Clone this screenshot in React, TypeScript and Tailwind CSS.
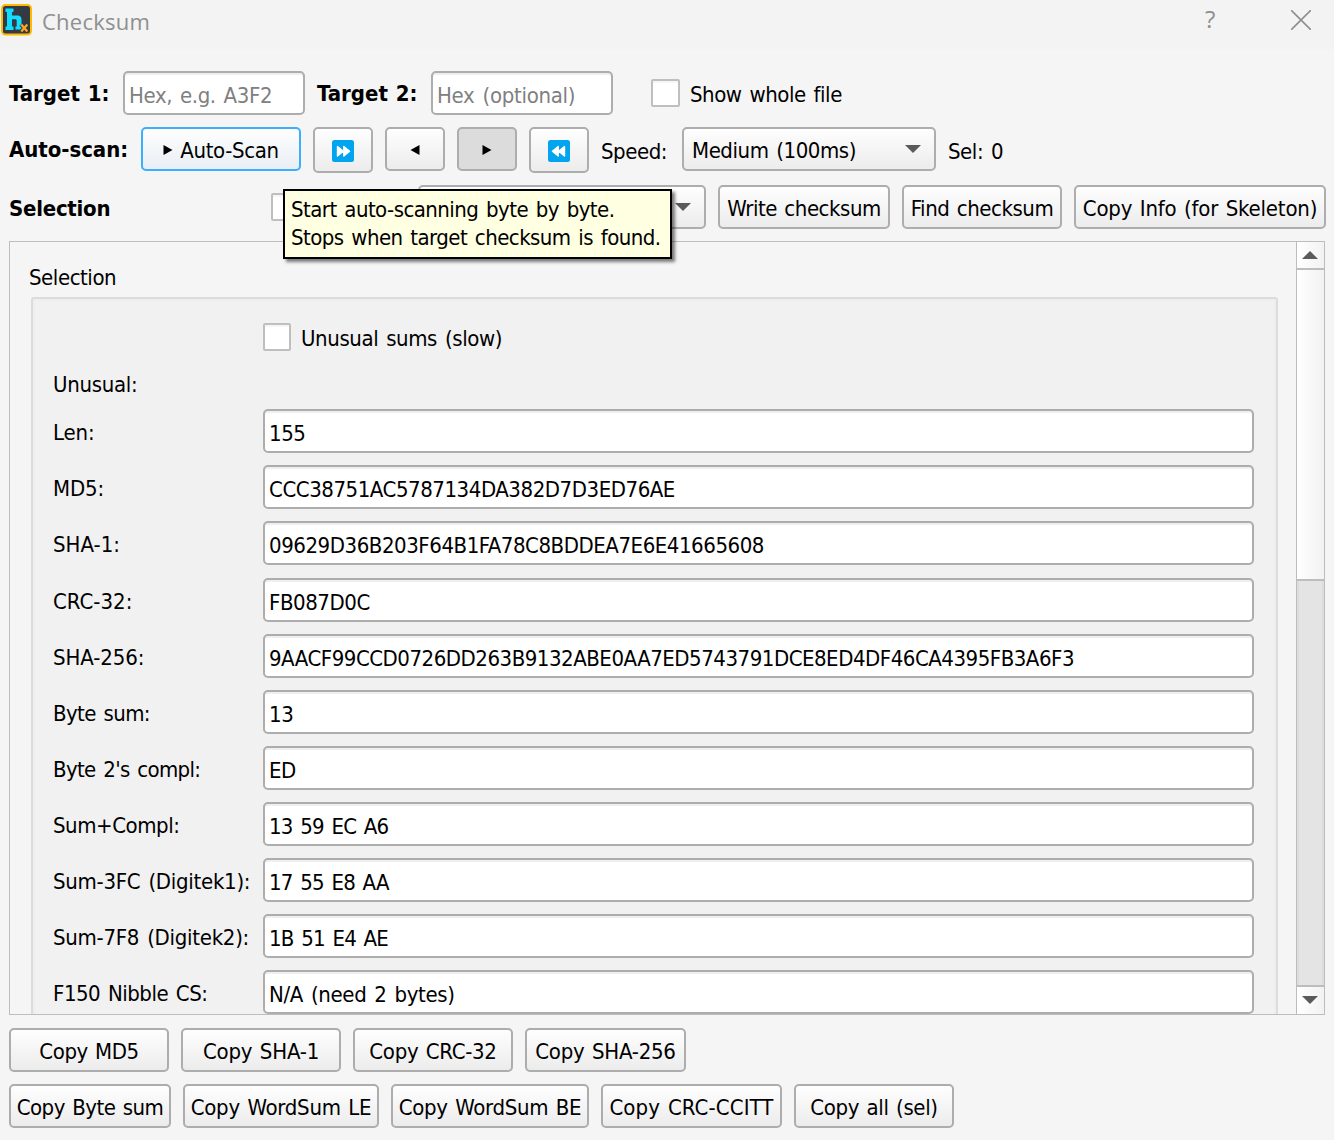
import React, { useState } from 'react';
import clsx from 'clsx';

const fields = [
  { label: 'Len:', value: '155', labelClass: 'tracking-[-0.1px]' },
  { label: 'MD5:', value: 'CCC38751AC5787134DA382D7D3ED76AE', labelClass: 'tracking-[-0.1px]' },
  { label: 'SHA-1:', value: '09629D36B203F64B1FA78C8BDDEA7E6E41665608', labelClass: 'tracking-normal' },
  { label: 'CRC-32:', value: 'FB087D0C', labelClass: 'tracking-normal' },
  {
    label: 'SHA-256:',
    value: '9AACF99CCD0726DD263B9132ABE0AA7ED5743791DCE8ED4DF46CA4395FB3A6F3',
    labelClass: 'tracking-[-0.1px]',
    inputClass: 'tracking-[-0.48px]',
  },
  { label: 'Byte sum:', value: '13', labelClass: 'tracking-[-0.6px]' },
  { label: "Byte 2's compl:", value: 'ED', labelClass: 'tracking-[-0.65px]' },
  {
    label: 'Sum+Compl:',
    value: '13 59 EC A6',
    labelClass: 'tracking-[-0.45px]',
    inputClass: 'tracking-[-0.75px]',
  },
  {
    label: 'Sum-3FC (Digitek1):',
    value: '17 55 E8 AA',
    labelClass: 'tracking-[-0.28px]',
    inputClass: 'tracking-[-0.75px]',
  },
  {
    label: 'Sum-7F8 (Digitek2):',
    value: '1B 51 E4 AE',
    labelClass: 'tracking-[-0.28px]',
    inputClass: 'tracking-[-0.75px]',
  },
  {
    label: 'F150 Nibble CS:',
    value: 'N/A (need 2 bytes)',
    labelClass: 'tracking-[-0.5px]',
    inputClass: 'tracking-[-0.35px]',
  },
];

type ButtonProps = {
  className?: string;
  children?: React.ReactNode;
};

const Button = ({ className, children }: ButtonProps) => (
  <button
    className={clsx(
      'flex shrink-0 items-center justify-center whitespace-nowrap rounded-[5px] border-2 pt-[3px] [word-spacing:1.5px]',
      className
    )}
  >
    {children}
  </button>
);

const plain = 'h-11 border-[#adadad] bg-linear-to-b from-[#fefefe] to-[#ececec]';

const Checkbox = ({ className }: { className?: string }) => (
  <span
    className={clsx(
      'block h-7 shrink-0 rounded-[2px] border-2 border-[#bfbfbf] bg-white shadow-[inset_0_2px_0_#f6f6f6]',
      className
    )}
  />
);

const Arrow = ({ dir }: { dir: 'up' | 'down' }) => (
  <svg width="16" height="8" viewBox="0 0 16 8" className="shrink-0">
    <path d={dir === 'up' ? 'M0 8L8 0L16 8Z' : 'M0 0H16L8 8Z'} fill="#5a5a5a" />
  </svg>
);

const Play = ({ left }: { left?: boolean }) => (
  <svg width="10" height="10" viewBox="0 0 10 10" className="-mt-0.5 shrink-0">
    <path d={left ? 'M9.5 0V10L0.5 5Z' : 'M0.5 0V10L9.5 5Z'} fill="#000" />
  </svg>
);

const Fast = ({ back }: { back?: boolean }) => (
  <svg
    width="22"
    height="22"
    viewBox="0 0 22 22"
    className={clsx('-mt-0.5 shrink-0', back && '-scale-x-100')}
  >
    <rect width="22" height="22" rx="2.5" fill="#00a4ef" />
    <path
      d="M5.5 6.5L11.3 11.2L5.5 16ZM11.8 6.5L17.6 11.2L11.8 16Z"
      fill="#fff"
      stroke="#fff"
      strokeWidth="1.4"
      strokeLinejoin="round"
    />
  </svg>
);

const Logo = () => (
  <svg width="32" height="36" viewBox="0 0 32 36" className="shrink-0">
    <rect x="2" y="5" width="29" height="29.5" rx="3.5" fill="#343a44" stroke="#ffb900" strokeWidth="2" />
    <path
      d="M5.5 8.5H13.5V12H12V15.5H17C20.5 15.5 21.5 17 21.5 20V26H22.5V29.5H15.5V26.5H16.7V21C16.7 19.8 16.2 19.3 15.2 19.3H12V26.5H13.5V30H5.5V26.5H7V12H5.5Z"
      fill="#12dcff"
    />
    <path d="M21 24.5L27.5 31.5M27.5 24.5L21 31.5" stroke="#343a44" strokeWidth="4" />
    <path d="M21.3 24.5L27.3 31.5M27.3 24.5L21.3 31.5" stroke="#ffa51f" strokeWidth="2.2" />
  </svg>
);

type TextInputProps = {
  value?: string;
  placeholder?: string;
  className?: string;
};

const TextInput = ({ value, placeholder, className }: TextInputProps) => (
  <input
    defaultValue={value}
    placeholder={placeholder}
    className={clsx(
      'h-11 shrink-0 rounded-[5px] border-2 border-[#adadad] bg-white px-1 pt-1 shadow-[inset_0_2px_0_#efefef] outline-none [word-spacing:2px] placeholder:text-[#808080]',
      className
    )}
  />
);

const App = () => {
  const [tooltip] = useState(true);

  return (
    <div className="relative flex h-[1140px] w-[1334px] flex-col overflow-hidden bg-[#f5f5f5] font-['DejaVu_Sans_Condensed','DejaVu_Sans',sans-serif] text-[22px] leading-7 tracking-[-0.45px] text-black [word-spacing:2px]">
      {/* Title bar */}
      <div className="flex h-[49px] shrink-0 items-start bg-[#f3f3f3] font-['Open_Sans',sans-serif] text-[#8f8f8f]">
        <Logo />
        <span className="mt-[7px] ml-2.5 w-[1152px] tracking-[0.25px]">Checksum</span>
        <span className="mt-[5px] w-[97px] pl-[11px] text-[24px]">?</span>
        <svg width="20" height="20" viewBox="0 0 20 20" className="mt-2.5">
          <path d="M0 0L20 20M20 0L0 20" stroke="#8f8f8f" strokeWidth="1.6" />
        </svg>
      </div>

      {/* Targets */}
      <div className="mt-[22px] flex h-11 shrink-0 items-center pl-[9px]">
        <span className="w-[114px] pt-0.5 font-bold tracking-normal [word-spacing:1px]">Target 1:</span>
        <TextInput placeholder="Hex, e.g. A3F2" className="w-[182px] tracking-[-0.4px]" />
        <span className="ml-3 w-[114px] pt-0.5 font-bold tracking-normal [word-spacing:1px]">Target 2:</span>
        <TextInput placeholder="Hex (optional)" className="w-[182px] tracking-[-0.3px]" />
        <Checkbox className="ml-[38px] w-[29px]" />
        <span className="ml-2.5 pt-1">Show whole file</span>
      </div>

      {/* Scan controls */}
      <div className="mt-3 flex h-[46px] shrink-0 items-start gap-3 pl-[9px]">
        <span className="mt-[9px] w-[120px] shrink-0 font-bold tracking-[-0.05px]">Auto-scan:</span>
        <Button className="h-11 w-40 gap-[7px] border-[#3daefe] bg-linear-to-b from-[#fefefe] to-[#e9eff5]">
          <Play />
          <span className="tracking-[-0.35px]">Auto-Scan</span>
        </Button>
        <Button className="h-[46px] w-[60px] border-[#adadad] bg-linear-to-b from-[#fefefe] to-[#ececec]">
          <Fast />
        </Button>
        <Button className={clsx(plain, 'w-[60px]')}>
          <Play left />
        </Button>
        <Button className="h-11 w-[60px] border-[#adadad] bg-[#dcdcdc]">
          <Play />
        </Button>
        <Button className="h-[46px] w-[60px] border-[#adadad] bg-linear-to-b from-[#fefefe] to-[#ececec]">
          <Fast back />
        </Button>
        <span className="mt-[11px] w-[69px] shrink-0">Speed:</span>
        <div
          className={clsx(
            plain,
            'flex w-[254px] shrink-0 items-center justify-between rounded-[5px] border-2 pr-[13px] pl-2'
          )}
        >
          <span className="pt-[3px]">Medium (100ms)</span>
          <Arrow dir="down" />
        </div>
        <span className="mt-[11px]">Sel: 0</span>
      </div>

      {/* Actions */}
      <div className="mt-3 flex h-11 shrink-0 items-center gap-3 pl-[9px]">
        <span className="w-[250px] shrink-0 pt-1 font-bold tracking-[-0.25px]">Selection</span>
        <Checkbox className="w-[29px]" />
        <div
          className={clsx(
            plain,
            'ml-[106px] flex w-[288px] shrink-0 items-center justify-end rounded-[5px] border-2 pr-[13px]'
          )}
        >
          <Arrow dir="down" />
        </div>
        <Button className={clsx(plain, 'w-[172px]')}>Write checksum</Button>
        <Button className={clsx(plain, 'w-40')}>Find checksum</Button>
        <Button className={clsx(plain, 'w-[252px] tracking-[-0.2px]')}>Copy Info (for Skeleton)</Button>
      </div>

      {/* Results */}
      <div className="mt-3 ml-[9px] flex h-[774px] w-[1316px] shrink-0 overflow-hidden border border-[#bdbdbd]">
        <div className="flex flex-1 flex-col pl-[21px]">
          <div className="mt-[22px] -ml-[2px] h-[33px] shrink-0">Selection</div>
          <div className="h-[800px] w-[1247px] shrink-0 rounded-t-[3px] border-2 border-[#dcdcdc] bg-[#f1f1f1] pl-5 shadow-[inset_0_0_0_2px_#eeeeee]">
            <div className="mt-6 ml-[210px] flex h-7 items-center gap-2.5">
              <Checkbox className="w-7" />
              <span className="pt-1 tracking-[-0.4px]">Unusual sums (slow)</span>
            </div>
            <div className="mt-5 mb-2.5 tracking-[-0.3px]">Unusual:</div>
            {fields.map((field, i) => (
              <div key={field.label} className={clsx('flex items-center', i === 2 ? 'mb-[13px]' : 'mb-3')}>
                <span className={clsx('w-[210px] shrink-0 whitespace-nowrap pt-[3px]', field.labelClass)}>
                  {field.label}
                </span>
                <TextInput value={field.value} className={clsx('w-[991px]', field.inputClass)} />
              </div>
            ))}
          </div>
        </div>
        <div className="flex w-[28px] shrink-0 flex-col border-l border-[#bdbdbd]">
          <div className="flex h-[28px] shrink-0 items-center justify-center border-b-2 border-[#bdbdbd] bg-linear-to-r from-white to-[#f2f2f2] pr-0.5">
            <Arrow dir="up" />
          </div>
          <div className="h-[311px] shrink-0 border-b-2 border-[#bdbdbd] bg-linear-to-r from-white to-[#f2f2f2]" />
          <div className="flex-1 border-x-2 border-[#dcdcdc] bg-[#e4e4e4]" />
          <div className="flex h-[29px] shrink-0 items-center justify-center border-t-2 border-[#bdbdbd] bg-linear-to-r from-white to-[#f2f2f2] pr-0.5 pb-0.5">
            <Arrow dir="down" />
          </div>
        </div>
      </div>

      {/* Copy buttons */}
      <div className="mt-[13px] flex h-11 shrink-0 gap-3 pl-[9px]">
        <Button className={clsx(plain, 'w-40')}>Copy MD5</Button>
        <Button className={clsx(plain, 'w-40 tracking-[-0.2px]')}>Copy SHA-1</Button>
        <Button className={clsx(plain, 'w-40 tracking-[-0.3px]')}>Copy CRC-32</Button>
        <Button className={clsx(plain, 'w-[161px] tracking-[-0.25px]')}>Copy SHA-256</Button>
      </div>
      <div className="mt-3 flex h-11 shrink-0 gap-3 pl-[9px]">
        <Button className={clsx(plain, 'w-[162px] tracking-[-0.5px]')}>Copy Byte sum</Button>
        <Button className={clsx(plain, 'w-[196px] tracking-[-0.25px]')}>Copy WordSum LE</Button>
        <Button className={clsx(plain, 'w-[198px] tracking-[-0.3px]')}>Copy WordSum BE</Button>
        <Button className={clsx(plain, 'w-[181px] tracking-[0.1px]')}>Copy CRC-CCITT</Button>
        <Button className={clsx(plain, 'w-40 tracking-[-0.35px]')}>Copy all (sel)</Button>
      </div>

      {/* Tooltip */}
      {tooltip && (
        <div className="absolute top-[189px] left-[283px] h-[70px] w-[389px] whitespace-nowrap border-2 border-black bg-[#ffffe1] pt-[5px] pl-1.5 tracking-[-0.55px] shadow-[3px_3px_3px_rgba(0,0,0,0.5)]">
          <div>Start auto-scanning byte by byte.</div>
          <div>Stops when target checksum is found.</div>
        </div>
      )}
    </div>
  );
};

export default App;
